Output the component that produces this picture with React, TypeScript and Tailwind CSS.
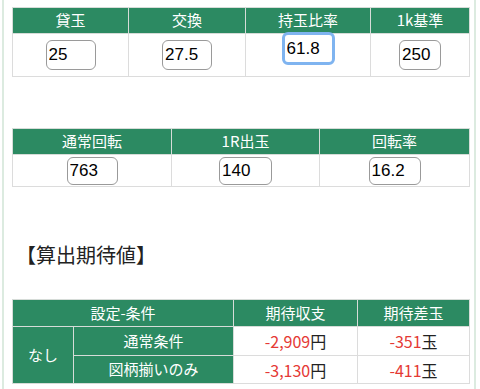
const font = { fontFamily: '"Noto Sans CJK JP", "Liberation Sans", sans-serif' };

function Field({ value, w, h = "h-[30px]", focus = false }: { value: string; w: string; h?: string; focus?: boolean }) {
  return (
    <input
      readOnly
      value={value}
      className={`${w} ${h} rounded-[6px] px-[2px] text-[17px] text-black bg-white outline-none ${
        focus ? "border-[3px] border-[#7fb4f0]" : "border-[1.5px] border-[#9a9a9a]"
      }`}
      style={{ fontFamily: '"Liberation Sans", sans-serif' }}
    />
  );
}

const th = "bg-[#2c8a62] text-white text-[15px] font-normal border border-[#d6dcd8] text-center p-0";
const td = "border border-[#dcdcdc] text-center p-0";

export default function App() {
  return (
    <div className="w-[480px] h-[389px] bg-white overflow-hidden" style={font}>
      <div className="ml-[2px] w-[474px] h-[389px] border-x-2 border-[#dcebe0] pl-[8px] pt-[7px]">
        {/* 入力 1 */}
        <table className="table-fixed border-collapse w-[457px]">
          <colgroup>
            <col className="w-[116px]" />
            <col className="w-[117px]" />
            <col className="w-[125px]" />
            <col className="w-[99px]" />
          </colgroup>
          <thead>
            <tr className="h-[26px]">
              <th className={th}>貸玉</th>
              <th className={th}>交換</th>
              <th className={th}>持玉比率</th>
              <th className={th}>1k基準</th>
            </tr>
          </thead>
          <tbody>
            <tr className="h-[43px]">
              <td className={td}><Field value="25" w="w-[50px]" /></td>
              <td className={td}><Field value="27.5" w="w-[50px]" /></td>
              <td className={`${td} align-top`}>
                <div className="-mt-[2px]">
                  <Field value="61.8" w="w-[53px]" h="h-[33px]" focus />
                </div>
              </td>
              <td className={td}><Field value="250" w="w-[42px]" /></td>
            </tr>
          </tbody>
        </table>

        {/* 入力 2 */}
        <table className="table-fixed border-collapse w-[457px] mt-[51px]">
          <colgroup>
            <col className="w-[159px]" />
            <col className="w-[148px]" />
            <col className="w-[150px]" />
          </colgroup>
          <thead>
            <tr className="h-[26px]">
              <th className={th}>通常回転</th>
              <th className={th}>1R出玉</th>
              <th className={th}>回転率</th>
            </tr>
          </thead>
          <tbody>
            <tr className="h-[32px]">
              <td className={td}><Field value="763" w="w-[51px]" h="h-[28px]" /></td>
              <td className={td}><Field value="140" w="w-[53px]" h="h-[28px]" /></td>
              <td className={td}><Field value="16.2" w="w-[52px]" h="h-[28px]" /></td>
            </tr>
          </tbody>
        </table>

        <h2 className="mt-[56px] ml-[4px] text-[20px] leading-[24px] text-[#222] font-normal">【算出期待値】</h2>

        {/* 結果 */}
        <table className="table-fixed border-collapse w-[457px] mt-[32px]">
          <colgroup>
            <col className="w-[61px]" />
            <col className="w-[160px]" />
            <col className="w-[124px]" />
            <col className="w-[112px]" />
          </colgroup>
          <thead>
            <tr className="h-[27px]">
              <th className={th} colSpan={2}>設定-条件</th>
              <th className={th}>期待収支</th>
              <th className={th}>期待差玉</th>
            </tr>
          </thead>
          <tbody className="text-[16px]">
            <tr className="h-[29px]">
              <td className={th} rowSpan={2}>なし</td>
              <td className={th}>通常条件</td>
              <td className={td}><span className="text-[#e53935]">-2,909</span><span className="text-[#222]">円</span></td>
              <td className={td}><span className="text-[#e53935]">-351</span><span className="text-[#222]">玉</span></td>
            </tr>
            <tr className="h-[28px]">
              <td className={th}>図柄揃いのみ</td>
              <td className={td}><span className="text-[#e53935]">-3,130</span><span className="text-[#222]">円</span></td>
              <td className={td}><span className="text-[#e53935]">-411</span><span className="text-[#222]">玉</span></td>
            </tr>
          </tbody>
        </table>
      </div>
    </div>
  );
}
